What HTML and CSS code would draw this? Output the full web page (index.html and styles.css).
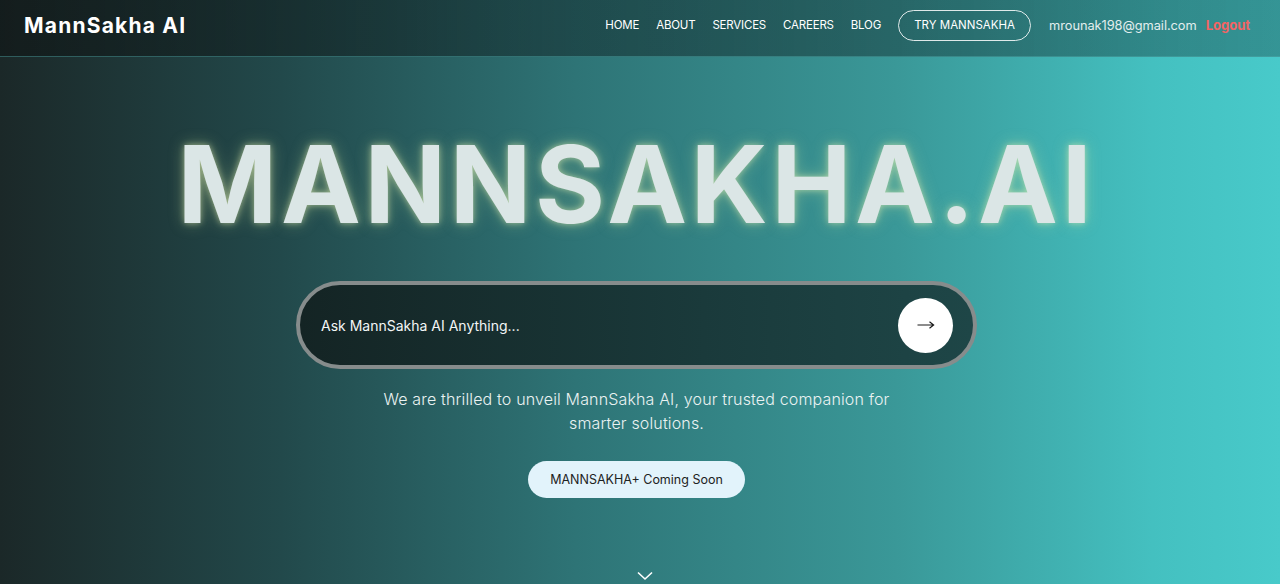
FILE: index.html
```html
<!DOCTYPE html>
<html lang="en">
<head>
<meta charset="utf-8">
<title>MannSakha AI</title>
<link rel="stylesheet" href="styles.css">
</head>
<body>
<div class="page">
  <header class="nav">
    <div class="logo">MannSakha AI</div>
    <nav class="menu">
      <a class="link">HOME</a>
      <a class="link">ABOUT</a>
      <a class="link">SERVICES</a>
      <a class="link">CAREERS</a>
      <a class="link">BLOG</a>
      <a class="try">TRY MANNSAKHA</a>
      <span class="email">mrounak198@gmail.com</span>
      <a class="logout">Logout</a>
    </nav>
  </header>
  <main class="hero">
    <h1 class="title">MANNSAKHA.AI</h1>
    <div class="search">
      <span class="placeholder">Ask MannSakha AI Anything...</span>
      <span class="go"><svg width="18" height="10" viewBox="0 0 18 10"><path d="M0.5 5 H16.5 M12.5 1.8 L16.6 5 L12.5 8.2" fill="none" stroke="#1a1a1a" stroke-width="1.2"/></svg></span>
    </div>
    <p class="lead">We are thrilled to unveil MannSakha AI, your trusted companion for smarter solutions.</p>
    <a class="soon">MANNSAKHA+ Coming Soon</a>
    <svg class="chev" width="16" height="10" viewBox="0 0 16 10"><path d="M1 1.5 L8 8 L15 1.5" fill="none" stroke="#ffffff" stroke-width="1.6"/></svg>
  </main>
</div>
</body>
</html>
```

FILE: styles.css
```css
* { box-sizing: border-box; }
html, body { margin: 0; padding: 0; }
body {
  font-family: "Inter", "Open Sans", sans-serif;
  color: #fff;
  overflow: hidden;
}
.page {
  width: 1280px;
  height: 584px;
  background: linear-gradient(90deg, #1b2828 0%, #22494b 22%, #2e7476 45%, #3a9898 70%, #44c0c0 90%, #48caca 100%);
  display: flex;
  flex-direction: column;
}
.nav {
  height: 57px;
  display: flex;
  align-items: center;
  justify-content: space-between;
  padding: 0 30px 6px 24px;
  background: linear-gradient(90deg, rgba(18,26,26,0.8) 0%, rgba(20,44,46,0.6) 40%, rgba(16,50,52,0.35) 100%);
  border-bottom: 1px solid rgba(80,170,170,0.45);
  flex-shrink: 0;
}
.logo {
  font-size: 21px;
  font-weight: 700;
  letter-spacing: 1.2px;
  color: #fff;
}
.menu {
  display: flex;
  align-items: center;
}
.link {
  font-size: 11.5px;
  color: #fff;
  margin-right: 17px;
  letter-spacing: -0.2px;
}
.try {
  font-size: 11.5px;
  color: #fff;
  border: 1px solid rgba(255,255,255,0.85);
  border-radius: 16px;
  height: 31px;
  width: 133px;
  display: flex;
  align-items: center;
  justify-content: center;
  margin-right: 18px;
}
.email {
  font-size: 12.8px;
  color: #e2eeee;
  margin-right: 9px;
  letter-spacing: -0.05px;
}
.logout {
  font-size: 13px;
  font-weight: 700;
  color: #f26464;
}
.hero {
  flex: 1;
  display: flex;
  flex-direction: column;
  align-items: center;
  padding-right: 7px;
}
.title {
  margin: 67px 0 0 0;
  font-size: 107px;
  line-height: 120px;
  font-weight: 700;
  letter-spacing: 3.7px;
  color: #dbe6e6;
  text-shadow: 0 0 6px rgba(230,240,180,0.55), 0 0 16px rgba(220,240,160,0.35);
}
.search {
  margin-top: 37px;
  width: 681px;
  height: 88px;
  border: 4px solid #868c8c;
  border-radius: 44px;
  background: linear-gradient(90deg, #142424 0%, #1a3a3b 60%, #1e4647 100%);
  display: flex;
  align-items: center;
  justify-content: space-between;
  padding: 0 20px 0 21px;
}
.placeholder {
  font-size: 14px;
  color: #f2f6f6;
}
.go {
  width: 55px;
  height: 55px;
  border-radius: 50%;
  background: #fff;
  display: flex;
  align-items: center;
  justify-content: center;
}
.lead {
  margin: 18px 0 0 0;
  width: 530px;
  text-align: center;
  font-size: 16px;
  line-height: 24px;
  color: #eaf2f2;
  font-weight: 300;
  letter-spacing: 0.15px;
}
.soon {
  margin-top: 26px;
  width: 217px;
  height: 37px;
  border-radius: 19px;
  background: #e2f3fb;
  color: #1d2222;
  font-size: 12.5px;
  display: flex;
  align-items: center;
  justify-content: center;
}
.chev {
  margin-top: 73px;
  margin-left: 16px;
}
```
